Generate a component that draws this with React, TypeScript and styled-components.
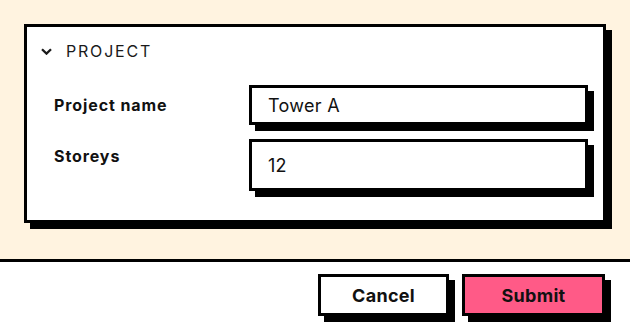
import React from "react";
import styled, { createGlobalStyle } from "styled-components";

const Global = createGlobalStyle`
  html, body { margin: 0; padding: 0; background: #ffffff; }
  body { font-family: Inter, "Noto Sans", sans-serif; color: #111; }
  * { box-sizing: border-box; }
`;

const Page = styled.div`
  width: 630px;
  display: flex;
  flex-direction: column;
`;

const Stage = styled.section`
  background: #fff3e0;
  padding: 24px 24px 36px;
  border-bottom: 3px solid #000;
`;

const Card = styled.div`
  background: #fff;
  border: 3px solid #000;
  box-shadow: 6px 6px 0 #000;
  display: flex;
  flex-direction: column;
  padding-bottom: 29px;
`;

const Header = styled.div`
  display: flex;
  align-items: center;
  gap: 14px;
  padding: 12px 14px 0;
  height: 36px;
  font-size: 16px;
  line-height: 24px;
  letter-spacing: 1.8px;
  text-transform: uppercase;
  color: #1a1a1a;
`;

const Fields = styled.div`
  display: grid;
  grid-template-columns: 195px 1fr;
  row-gap: 14px;
  padding: 22px 15px 0 27px;
  align-items: start;
`;

const Label = styled.label<{ $pad: number }>`
  font-size: 16px;
  font-weight: 700;
  line-height: 20px;
  letter-spacing: 0.9px;
  padding-top: ${(p) => p.$pad}px;
  color: #111;
`;

const Field = styled.div<{ $h: number }>`
  height: ${(p) => p.$h}px;
  border: 3px solid #000;
  box-shadow: 6px 6px 0 #000;
  background: #fff;
  display: flex;
  align-items: center;
  padding: 0 16px;
  font-size: 18px;
  letter-spacing: 0.3px;
  color: #111;
`;

const Footer = styled.footer`
  display: flex;
  justify-content: flex-end;
  gap: 13px;
  padding: 12px 25px 13px;
`;

const Button = styled.button<{ $primary?: boolean; $w: number }>`
  width: ${(p) => p.$w}px;
  height: 42px;
  border: 3px solid #000;
  box-shadow: 6px 6px 0 #000;
  background: ${(p) => (p.$primary ? "#ff5a87" : "#fff")};
  font-family: Inter, "Noto Sans", sans-serif;
  font-size: 18px;
  font-weight: 700;
  letter-spacing: 0.3px;
  color: #111;
  padding: 0;
  cursor: pointer;
`;

const Chevron = () => (
  <svg width="11" height="7" viewBox="0 0 11 7" fill="none">
    <polyline points="1,1.2 5.5,5.6 10,1.2" stroke="#1a1a1a" strokeWidth="2.3" />
  </svg>
);

export default function App() {
  return (
    <Page>
      <Global />
      <Stage>
        <Card>
          <Header>
            <Chevron />
            <span>Project</span>
          </Header>
          <Fields>
            <Label $pad={10}>Project name</Label>
            <Field $h={40}>Tower A</Field>
            <Label $pad={7}>Storeys</Label>
            <Field $h={52}>12</Field>
          </Fields>
        </Card>
      </Stage>
      <Footer>
        <Button $w={131}>Cancel</Button>
        <Button $w={143} $primary>
          Submit
        </Button>
      </Footer>
    </Page>
  );
}
